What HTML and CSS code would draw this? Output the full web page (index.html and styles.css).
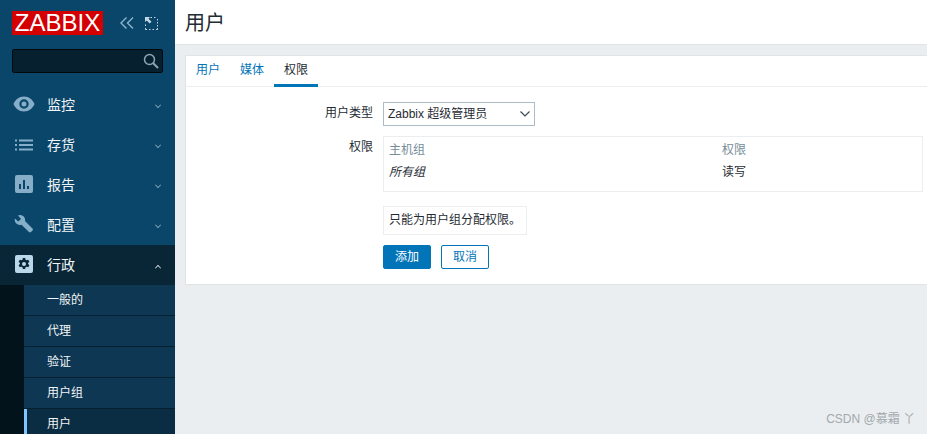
FILE: index.html
```html
<!DOCTYPE html>
<html lang="zh">
<head>
<meta charset="utf-8">
<title>用户</title>
<link rel="stylesheet" href="styles.css">
</head>
<body>
<div class="app">
  <aside class="sidebar">
    <div class="brand">
      <div class="logo">ZABBIX</div>
      <svg class="collapse" width="14" height="12" viewBox="0 0 14 12"><path d="M6.500.5 1 6l5.500 5.500M13 .5 7.500 6l5.500 5.500" fill="none" stroke="#8db5cf" stroke-width="1.4"/></svg>
      <svg class="kiosk" width="13" height="13" viewBox="0 0 13 13"><path d="M5.5.5h1.5M9 .5h1.5M12.500 2v1.500M12.500 5v1.500M12.500 8v1.500M12.500 11v1.500H11M9 12.500H7.500M5.500 12.500H4M2 12.500H.5V11M.5 9V7.500" fill="none" stroke="#c4d8e6" stroke-width="1"/><path d="M0 0h5L3.500 1.700 6.500 4.700 4.700 6.500 1.700 3.500 0 5z" fill="#c4d8e6"/></svg>
    </div>
    <div class="search">
      <svg width="16" height="16" viewBox="0 0 16 16"><circle cx="6.500" cy="6.500" r="5" fill="none" stroke="#8aa5b5" stroke-width="1.500"/><path d="m10 10 5 5" stroke="#8aa5b5" stroke-width="2"/></svg>
    </div>
    <nav class="menu">
      <div class="item">
        <svg class="ico i-eye" width="22" height="16" viewBox="0 0 22 16"><path fill-rule="evenodd" d="M11 .5c5 0 9 3.500 10.500 7.500C20 12 16 15.500 11 15.500S2 12 .5 8C2 4 6 .5 11 .5zm0 2.800a4.700 4.700 0 1 0 0 9.400 4.700 4.700 0 0 0 0-9.400zM11 5.500a2.500 2.500 0 1 1 0 5 2.500 2.500 0 0 1 0-5z" fill="#86aec8"/></svg>
        <span class="label">监控</span><span class="chev"></span>
      </div>
      <div class="item">
        <svg class="ico i-list" width="18" height="12" viewBox="0 0 18 12"><path d="M0 .5h2v2H0zM0 5h2v2H0zM0 9.500h2v2H0zM4 .5h14v2H4zM4 5h14v2H4zM4 9.500h14v2H4z" fill="#86aec8"/></svg>
        <span class="label">存货</span><span class="chev"></span>
      </div>
      <div class="item">
        <svg class="ico" width="18" height="18" viewBox="0 0 18 18"><path fill-rule="evenodd" d="M2 0h14a2 2 0 0 1 2 2v14a2 2 0 0 1-2 2H2a2 2 0 0 1-2-2V2a2 2 0 0 1 2-2zm2 9v5h2V9zm4-4v9h2V5zm4 6v3h2v-3z" fill="#86aec8"/></svg>
        <span class="label">报告</span><span class="chev"></span>
      </div>
      <div class="item">
        <svg class="ico i-wrench" width="19" height="18" viewBox="0 0 18 18"><path d="M5.500 0a5 5 0 0 1 5 6l7.500 7.500a1.500 1.500 0 0 1 0 2L16.500 17a1.500 1.500 0 0 1-2 0L7 9.800A5.200 5.200 0 0 1 .4 3.500l3.300 3L6.500 4 3.500.4A5 5 0 0 1 5.500 0z" fill="#86aec8"/></svg>
        <span class="label">配置</span><span class="chev"></span>
      </div>
      <div class="item active">
        <svg class="ico" width="18" height="18" viewBox="0 0 18 18"><path fill-rule="evenodd" d="M2 0h14a2 2 0 0 1 2 2v14a2 2 0 0 1-2 2H2a2 2 0 0 1-2-2V2a2 2 0 0 1 2-2zm5.800 3-.3 1.700-1.100.6-1.600-.6-1.200 2.100 1.300 1.100v1.200l-1.300 1.100 1.200 2.100 1.600-.6 1.100.6.300 1.700h2.400l.3-1.700 1.100-.6 1.600.6 1.200-2.100-1.300-1.100V7.900l1.300-1.100-1.200-2.100-1.600.6-1.100-.6L10.200 3zM9 7a2 2 0 1 1 0 4 2 2 0 0 1 0-4z" fill="#b9d6ea"/></svg>
        <span class="label">行政</span><span class="chev up"></span>
      </div>
      <div class="submenu">
        <div class="sub">一般的</div>
        <div class="sub">代理</div>
        <div class="sub">验证</div>
        <div class="sub">用户组</div>
        <div class="sub current">用户</div>
      </div>
    </nav>
  </aside>
  <main class="main">
    <header class="head"><h1>用户</h1></header>
    <section class="panel">
      <div class="tabs">
        <span class="tab">用户</span>
        <span class="tab">媒体</span>
        <span class="tab on">权限</span>
      </div>
      <div class="form">
        <div class="row r-type">
          <div class="lab">用户类型</div>
          <div class="select">Zabbix 超级管理员<svg width="10" height="6" viewBox="0 0 10 6"><path d="m.5.500 4.500 4.500L9.500.5" fill="none" stroke="#3a4a54" stroke-width="1.200"/></svg></div>
        </div>
        <div class="row r-perm">
          <div class="lab">权限</div>
          <div class="box">
            <div class="grid">
              <span class="th">主机组</span><span class="th">权限</span>
              <em class="td">所有组</em><span class="td">读写</span>
            </div>
          </div>
        </div>
        <div class="row r-note">
          <div class="lab"></div>
          <div class="note">只能为用户组分配权限。</div>
        </div>
        <div class="row">
          <div class="lab"></div>
          <div class="btns"><button class="btn primary">添加</button><button class="btn ghost">取消</button></div>
        </div>
      </div>
    </section>
    <div class="mark">CSDN @慕霜 丫</div>
  </main>
</div>
</body>
</html>
```
FILE: styles.css
```css
* { box-sizing: border-box; }
html, body { margin: 0; height: 100%; overflow: hidden; }
body { font: 12px/14px "Liberation Sans", "Noto Sans CJK SC", sans-serif; color: #1f2c33; background: #ebeef0; }
.app { display: flex; height: 434px; width: 927px; }

.sidebar { width: 175px; flex: none; background: #0a466a; overflow: hidden; display: flex; flex-direction: column; }
.brand { flex: none; display: flex; align-items: center; padding: 11px 0 0 12px; height: 35px; }
.logo { width: 91px; height: 24px; background: #d40000; color: #fff; font: 24px/24px "Liberation Sans", sans-serif; text-align: center; }
.collapse { margin-left: 17px; }
.kiosk { margin-left: 11px; }
.search { flex: none; margin: 14px 0 0 12px; width: 151px; height: 24px; background: #07202f; border: 1px solid #02090e; border-radius: 2px; display: flex; align-items: center; justify-content: flex-end; padding-right: 3px; }
.menu { flex: none; margin-top: 12px; }
.item { height: 40px; display: flex; align-items: center; position: relative; color: #f2f5f7; font-size: 14px; }
.ico { position: absolute; left: 15px; top: 10px; }
.i-eye { left: 13px; top: 11px; }
.i-list { top: 14px; }
.i-wrench { left: 14px; }
.label { margin-left: 47px; }
.chev { position: absolute; left: 155px; top: 17px; width: 6px; height: 6px; border: solid #9dbbcf; border-width: 0 1.500px 1.500px 0; transform: rotate(45deg) scale(.7); }
.chev.up { top: 20px; border-color: #fff; transform: rotate(-135deg) scale(.7); }
.item.active { background: #092637; }
.submenu { padding-left: 24px; background: #03131c; }
.sub { height: 31px; padding: 9px 0 0 23px; background: #0e3753; border-bottom: 1px solid #05202f; color: #f2f5f7; line-height: 13px; }
.sub.current { background: #0b2d43; border-left: 3px solid #7fc6ff; padding-left: 20px; height: 31px; }

.main { flex: 1; min-width: 0; position: relative; }
.head { height: 45px; background: #fff; border-bottom: 1px solid #dfe4e7; padding: 11px 0 0 10px; }
h1 { margin: 0; font-weight: normal; font-size: 20px; line-height: 24px; color: #1f2c33; }
.panel { margin: 10px 0 0 10px; height: 230px; background: #fff; border: 1px solid #dfe4e7; border-right: 0; }
.tabs { height: 31px; border-bottom: 1px solid #ebeef0; display: flex; }
.tab { padding: 7px 10px 0; color: #0275b8; height: 31px; width: 44px; }
.tab.on { color: #1f2c33; border-bottom: 3px solid #0275b8; }
.form { padding-top: 15px; }
.row { display: flex; }
.lab { width: 187px; flex: none; text-align: right; padding: 4px 0 0; }
.select { margin-left: 10px; width: 152px; height: 24px; border: 1px solid #acbbc4; display: flex; align-items: center; justify-content: space-between; padding: 0 4px; }
.r-perm { margin-top: 10px; }
.box { margin-left: 10px; width: 540px; height: 56px; border: 1px solid #ebeef0; padding: 6px 5px 0; }
.grid { display: grid; grid-template-columns: 333px 1fr; row-gap: 8px; }
.th { color: #768d99; line-height: 14px; }
.td { line-height: 14px; font-style: normal; }
em.td { font-style: italic; }
.r-note { margin-top: 14px; }
.note { margin-left: 10px; width: 144px; height: 29px; border: 1px solid #ebeef0; padding: 6px 5px 0; }
.btns { margin-left: 10px; margin-top: 10px; display: flex; gap: 10px; }
.btn { width: 48px; height: 24px; border-radius: 2px; font: inherit; padding: 0; }
.primary { background: #0275b8; border: 1px solid #0275b8; color: #fff; }
.ghost { background: #fff; border: 1px solid #0275b8; color: #0275b8; }
.mark { position: absolute; right: 12px; top: 412px; color: #a2a9ae; font-size: 12px; }
```
